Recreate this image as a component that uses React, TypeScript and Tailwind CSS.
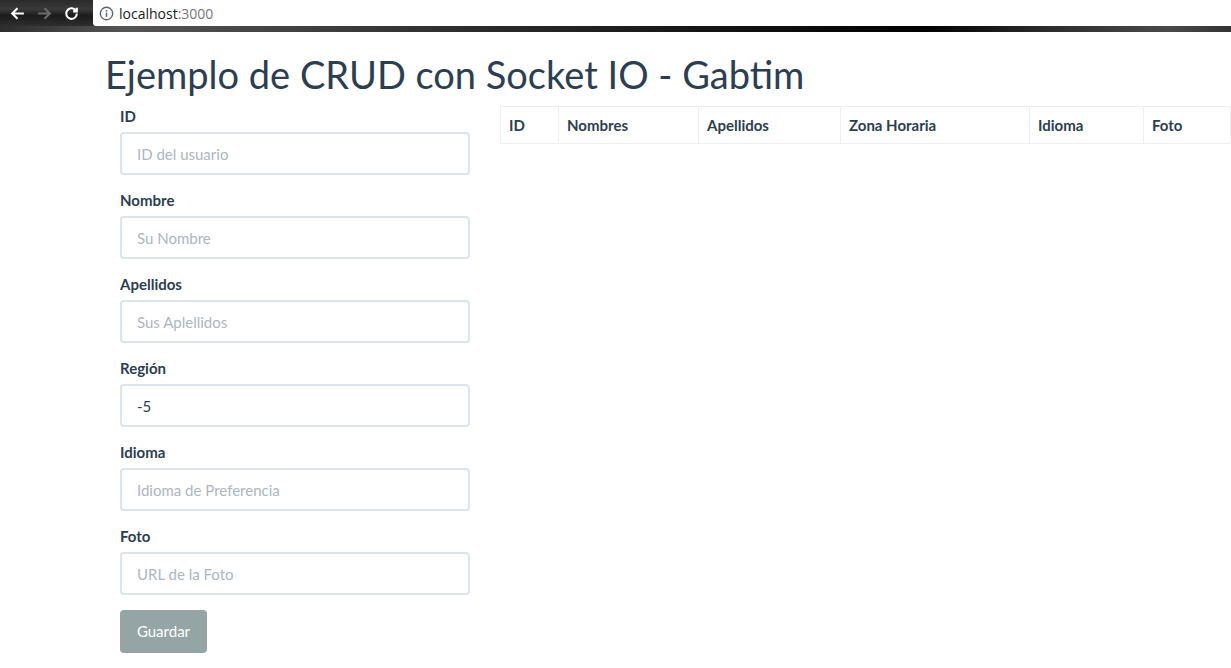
import React from "react";

const FIELDS = [
  { label: "ID", placeholder: "ID del usuario", value: "" },
  { label: "Nombre", placeholder: "Su Nombre", value: "" },
  { label: "Apellidos", placeholder: "Sus Aplellidos", value: "" },
  { label: "Región", placeholder: "", value: "-5" },
  { label: "Idioma", placeholder: "Idioma de Preferencia", value: "" },
  { label: "Foto", placeholder: "URL de la Foto", value: "" },
];

const COLUMNS = [
  { name: "ID", width: "w-[58px]" },
  { name: "Nombres", width: "w-[140px]" },
  { name: "Apellidos", width: "w-[142px]" },
  { name: "Zona Horaria", width: "w-[189px]" },
  { name: "Idioma", width: "w-[114px]" },
  { name: "Foto", width: "w-[87px]" },
];

function BrowserBar() {
  return (
    <div className="h-[32px] flex flex-col bg-[#0b0b0b]">
      <div className="h-[26px] flex items-stretch bg-[linear-gradient(180deg,#2a2a2a_0%,#3a3a3a_35%,#1c1c1c_60%,#2e2e2e_100%)]">
        <div className="w-[93px] flex items-center pl-[9px] gap-[10px]">
          <svg width="17" height="17" viewBox="0 0 16 16" fill="none" stroke="#ffffff" strokeWidth="2">
            <path d="M14 8H3M8 3L3 8l5 5" />
          </svg>
          <svg width="17" height="17" viewBox="0 0 16 16" fill="none" stroke="#6b6b6b" strokeWidth="2">
            <path d="M2 8h11M8 3l5 5-5 5" />
          </svg>
          <svg width="17" height="17" viewBox="0 0 16 16" fill="none" stroke="#ffffff" strokeWidth="2">
            <path d="M13 8a5 5 0 1 1-1.5-3.5" />
            <path d="M13 2.5v3.5H9.5" fill="#ffffff" />
          </svg>
        </div>
        <div className="flex-1 bg-white rounded-bl-[3px] flex items-center pl-[6px] gap-[5px] font-['Segoe_UI','Open_Sans',sans-serif] text-[14px]">
          <svg width="15" height="15" viewBox="0 0 16 16">
            <circle cx="8" cy="8" r="6.6" fill="none" stroke="#5f6368" strokeWidth="1.5" />
            <rect x="7.2" y="7" width="1.6" height="4.6" fill="#5f6368" />
            <rect x="7.2" y="4.3" width="1.6" height="1.6" fill="#5f6368" />
          </svg>
          <span className="text-[#222]">
            localhost<span className="text-[#777]">:3000</span>
          </span>
        </div>
      </div>
      <div className="h-[6px] bg-[linear-gradient(90deg,#2d2d2d_0%,#555_10%,#2a2a2a_40%,#0c0c0c_65%,#000_75%,#2c2c2c_85%,#4a4a4a_95%,#333_100%)]" />
    </div>
  );
}

export default function App() {
  return (
    <div className="w-[1231px] h-[668px] overflow-hidden bg-white font-['Lato',sans-serif] text-[#2c3e50]">
      <BrowserBar />
      <div className="pl-[105px]">
        <h1 className="mt-[21px] mb-[10px] text-[38px] leading-[43px] font-normal">
          Ejemplo de CRUD con Socket IO - Gabtim
        </h1>
        <div className="flex">
          <div className="w-[380px] px-[15px]">
            {FIELDS.map((f) => (
              <div key={f.label} className="mb-[15px]">
                <label className="block mb-[5px] text-[15px] leading-[21px] font-bold">{f.label}</label>
                <input
                  className="block w-[350px] h-[43px] px-[15px] border-2 border-[#dce4ec] rounded-[4px] text-[15px] text-[#2c3e50] placeholder:text-[#acb6c0] outline-none"
                  placeholder={f.placeholder}
                  defaultValue={f.value}
                />
              </div>
            ))}
            <button className="h-[43px] w-[87px] rounded-[4px] bg-[#95a5a6] text-white text-[15px]">
              Guardar
            </button>
          </div>
          <div className="pl-[15px]">
            <table className="table-fixed border-collapse w-[730px]">
              <thead>
                <tr>
                  {COLUMNS.map((c) => (
                    <th
                      key={c.name}
                      className={`${c.width} border border-[#ecf0f1] px-[8px] py-[7.5px] text-left text-[15px] leading-[21.4px] font-bold`}
                    >
                      {c.name}
                    </th>
                  ))}
                </tr>
              </thead>
            </table>
          </div>
        </div>
      </div>
    </div>
  );
}
